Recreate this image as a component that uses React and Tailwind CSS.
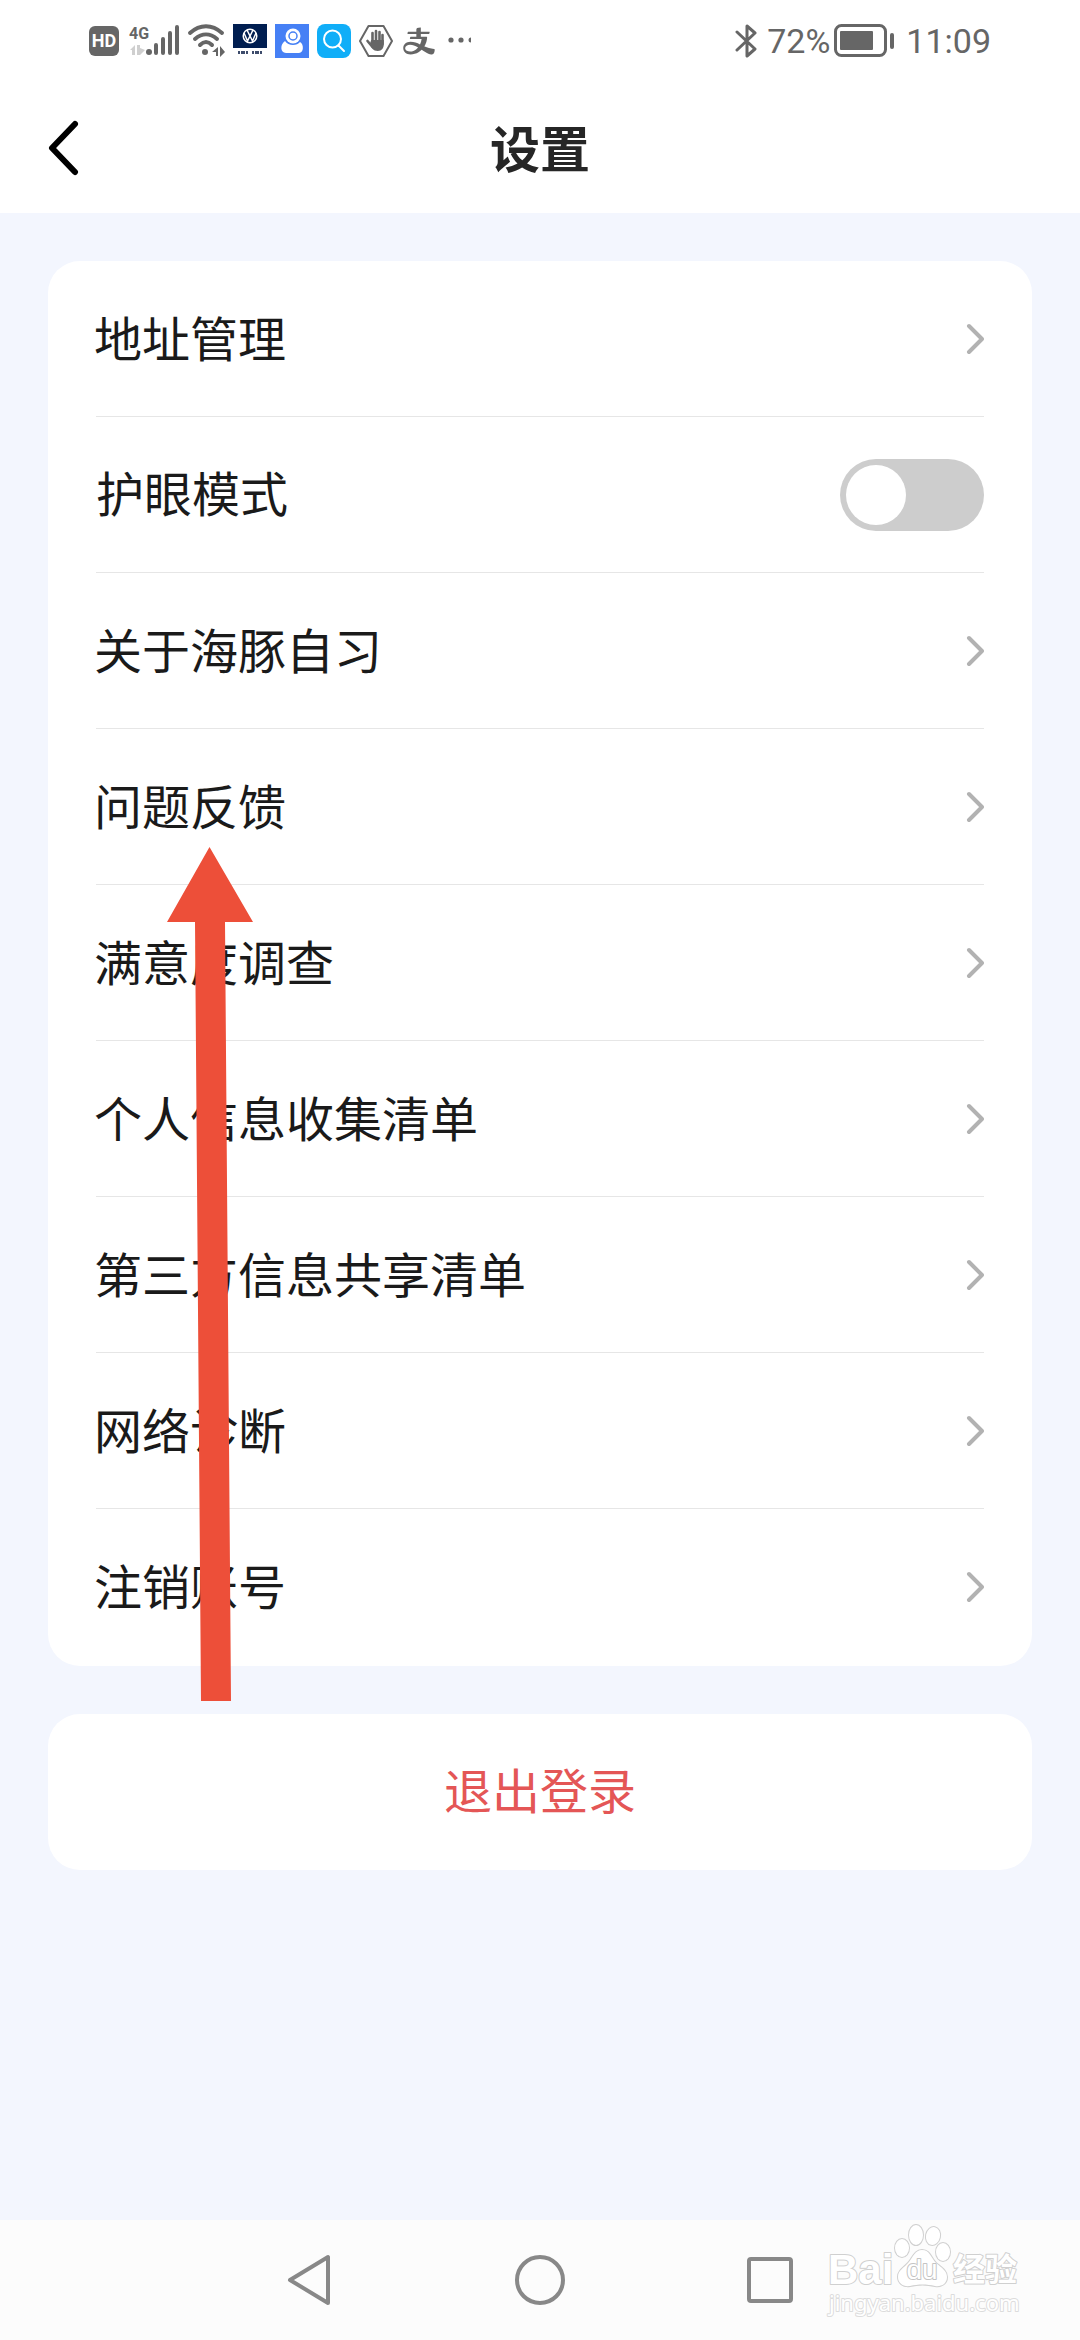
import React, { useState } from 'react';
import { AiOutlineAlipay } from 'react-icons/ai';

const menuItems = [
  { id: 'address', label: '地址管理' },
  { id: 'eye-care', label: '护眼模式', type: 'switch' },
  { id: 'about', label: '关于海豚自习' },
  { id: 'feedback', label: '问题反馈' },
  { id: 'survey', label: '满意度调查' },
  { id: 'personal-info', label: '个人信息收集清单' },
  { id: 'third-party', label: '第三方信息共享清单' },
  { id: 'network', label: '网络诊断' },
  { id: 'close-account', label: '注销账号' },
];

const SignalIcon = () => (
  <svg className="overflow-visible" width="52" height="34" viewBox="0 0 52 34" fill="currentColor">
    <text x="2" y="15" fontSize="16" fontWeight="700" fontFamily="Roboto, sans-serif">4G</text>
    <path d="M3 26l5-5v10H5v-5zM10 21h3v3l5 2-5 5h-3z" fill="#cfcfcf" />
    <circle cx="22" cy="28" r="3" />
    <path d="M29 21v8M36 15v14M43 9v20M50 3v26" stroke="currentColor" strokeWidth="4" strokeLinecap="round" />
  </svg>
);

const WifiIcon = () => (
  <svg width="38" height="34" viewBox="0 0 38 34" fill="none" stroke="currentColor" strokeWidth="4" strokeLinecap="round">
    <path d="M3 9C13 0 25 0 35 9M8 15c7-6 15-6 22 0M13 21c4-4 8-4 12 0" />
    <circle cx="18" cy="28" r="3" fill="currentColor" stroke="none" />
    <path d="M25 28l6-5v9h-2v-4zM33 22l5 6-5 5z" fill="currentColor" stroke="none" />
  </svg>
);

const CarAppIcon = () => (
  <svg width="34" height="34" viewBox="0 0 34 34">
    <rect width="34" height="24" fill="#001e50" />
    <g fill="none" stroke="#fff" strokeWidth="1.5">
      <circle cx="17" cy="12" r="6.8" />
      <path d="M14 6l3 6 3-6M11 9l3.500 8 2.500-5 2.500 5L23 9" />
    </g>
    <path d="M5 28.500h5M10 28.500h6M19 28.500h5M24 28.500h5" stroke="#3d4b6b" strokeWidth="3" strokeDasharray="2 1" />
  </svg>
);

const CameraAppIcon = () => (
  <svg width="34" height="34" viewBox="0 0 34 34">
    <rect width="34" height="34" fill="#4680f5" />
    <circle cx="18" cy="12" r="7.5" fill="#fff" />
    <circle cx="18" cy="12" r="4" fill="none" stroke="#4680f5" strokeWidth="1.5" />
    <path d="M10 17c3 5 12 5 15 1 4 2 4 11-1 11H11c-6 0-6-9-1-12z" fill="#fff" />
  </svg>
);

const SearchAppIcon = () => (
  <svg width="34" height="34" viewBox="0 0 34 34">
    <rect width="34" height="34" rx="8" fill="#10aef8" />
    <g fill="none" stroke="#fff" strokeWidth="2" strokeLinecap="round">
      <circle cx="15.5" cy="15" r="8.5" />
      <path d="M21.500 21.500l5.500 5.500" />
    </g>
  </svg>
);

const HandIcon = () => (
  <svg width="34" height="34" viewBox="0 0 34 34">
    <path d="M9.500 2h15L33 17l-8.500 15h-15L1 17z" fill="none" stroke="currentColor" strokeWidth="2" strokeLinejoin="round" />
    <path d="M13.500 9v10M17 7v12M20.500 8v11M23.500 11v9M8.500 17l5 6" stroke="currentColor" strokeWidth="2.6" strokeLinecap="round" />
    <path d="M12.200 16h12.600v4c0 4-2 7-6 7-5 0-6-3-8-7z" fill="currentColor" />
  </svg>
);

const StatusBar = () => (
  <div className="flex h-[82px] items-center justify-between px-[89px] text-[#666666]">
    <div className="flex items-center gap-2">
      <span className="flex h-[30px] w-[30px] items-center justify-center rounded-md bg-[#666666] font-[Roboto,sans-serif] text-[18px] font-bold text-white">
        HD
      </span>
      <SignalIcon />
      <WifiIcon />
      <CarAppIcon />
      <CameraAppIcon />
      <SearchAppIcon />
      <HandIcon />
      <AiOutlineAlipay size={36} />
      <svg width="26" height="34" viewBox="0 0 26 34" fill="currentColor">
        <circle cx="6" cy="16" r="2.6" />
        <circle cx="16" cy="16" r="2.6" />
        <path d="M26 13.500a2.500 2.500 0 0 0 0 5z" />
      </svg>
    </div>
    <div className="flex items-center font-[Roboto,sans-serif] text-[34px] leading-none">
      <svg width="24" height="36" viewBox="0 0 24 36" fill="none" stroke="currentColor" strokeWidth="3" strokeLinejoin="round" strokeLinecap="round">
        <path d="M2 9l18 17-8 7V3l8 7L2 27" />
      </svg>
      <span className="ml-2">72%</span>
      <svg className="ml-1" width="60" height="34" viewBox="0 0 60 34">
        <rect x="1.5" y="1.5" width="50" height="30" rx="6" fill="none" stroke="currentColor" strokeWidth="3" />
        <rect x="6" y="7" width="33" height="19" rx="1" fill="currentColor" />
        <rect x="56" y="9" width="4" height="16" rx="2" fill="currentColor" />
      </svg>
      <span className="ml-3">11:09</span>
    </div>
  </div>
);

const Switch = ({ id }) => {
  const [checked, setChecked] = useState(false);
  return (
    <input
      id={id}
      type="checkbox"
      role="switch"
      checked={checked}
      onChange={(e) => setChecked(e.target.checked)}
      className="flex h-[72px] w-[144px] appearance-none items-center rounded-full bg-[#cdcdcd] px-1.5 before:h-[60px] before:w-[60px] before:rounded-full before:bg-white checked:justify-end checked:bg-blue-500"
    />
  );
};

const MenuRow = ({ item }) => {
  if (item.type === 'switch') {
    return (
      <div className="flex h-[155px] items-center justify-between">
        <label htmlFor={item.id} className="pb-2">{item.label}</label>
        <Switch id={item.id} />
      </div>
    );
  }

  return (
    <button type="button" className="flex h-[155px] w-full items-center justify-between text-left">
      <span className="-ml-0.5 pb-1.5">{item.label}</span>
      <svg width="18" height="32" viewBox="0 0 18 32" fill="none" stroke="#b2b2b2" strokeWidth="4" strokeLinecap="round" strokeLinejoin="round">
        <path d="M3 3l13 13L3 29" />
      </svg>
    </button>
  );
};

const Watermark = () => (
  <svg
    className="absolute top-0 right-[52px]"
    width="204"
    height="120"
    viewBox="0 0 204 120"
    fill="#fff"
    stroke="#d0d0d0"
    strokeWidth="2"
    strokeLinejoin="round"
    paintOrder="stroke"
  >
    <text x="4" y="64" fontSize="42" fontWeight="700" fontFamily="Liberation Sans, sans-serif">Bai</text>
    <ellipse cx="78" cy="28" rx="7" ry="9" />
    <ellipse cx="92" cy="15" rx="7" ry="10" />
    <ellipse cx="109" cy="16" rx="7" ry="9" transform="rotate(12 109 16)" />
    <ellipse cx="119" cy="32" rx="7" ry="9" />
    <path d="M98 30c8 0 9 8 14 13 6 5 11 8 11 14 0 7-6 10-12 9-8-2-17-2-25 0-7 1-12-3-12-9 0-7 6-9 11-15 4-5 6-12 13-12z" />
    <text x="98" y="59" textAnchor="middle" fontSize="28" fontFamily="Liberation Sans, sans-serif" stroke="#c4c4c4">du</text>
    <text x="129" y="61" fontSize="32" fontWeight="700" fontFamily="Noto Sans CJK SC, sans-serif">经验</text>
    <text x="5" y="91" fontSize="22" fontFamily="Noto Sans, sans-serif" stroke="#dcdcdc">jingyan.baidu.com</text>
  </svg>
);

const NavigationBar = () => (
  <nav className="relative grid h-[120px] grid-cols-3 items-center justify-items-center bg-[#fcfcfc] px-[18%] text-[#888888]">
    <button type="button" aria-label="返回">
      <svg width="50" height="54" viewBox="0 0 50 54" fill="none" stroke="currentColor" strokeWidth="4" strokeLinejoin="round">
        <path d="M43 4v46L5 27z" />
      </svg>
    </button>
    <button type="button" aria-label="主页">
      <svg width="54" height="54" viewBox="0 0 54 54" fill="none" stroke="currentColor" strokeWidth="4">
        <circle cx="27" cy="27" r="23" />
      </svg>
    </button>
    <button type="button" aria-label="最近任务">
      <svg width="50" height="54" viewBox="0 0 50 54" fill="none" stroke="currentColor" strokeWidth="4">
        <rect x="4" y="6" width="42" height="42" rx="2" />
      </svg>
    </button>
    <Watermark />
  </nav>
);

const App = () => {
  return (
    <div className="relative flex min-h-screen flex-col bg-[#f3f6fe] font-['Noto_Sans_CJK_SC',sans-serif] text-[48px] leading-none text-[#1a1a1a]">
      <header className="bg-white">
        <StatusBar />
        <div className="grid h-[131px] grid-cols-[1fr_auto_1fr] items-center px-12">
          <button type="button" aria-label="返回" className="justify-self-start">
            <svg width="31" height="56" viewBox="0 0 31 56" fill="none" stroke="#000" strokeWidth="6" strokeLinecap="round" strokeLinejoin="round">
              <path d="M27 4L4 28l23 24" />
            </svg>
          </button>
          <h1 className="pb-1 text-[50px] font-bold text-[#262626]">设置</h1>
        </div>
      </header>

      <main className="flex flex-1 flex-col gap-12 p-12">
        <ul className="divide-y divide-[#e6e6e6] rounded-[32px] bg-white px-12 pb-0.5">
          {menuItems.map((item) => (
            <li key={item.id}>
              <MenuRow item={item} />
            </li>
          ))}
        </ul>
        <button type="button" className="h-[156px] rounded-[32px] bg-white pb-2 text-[#e45656]">
          退出登录
        </button>
      </main>

      <NavigationBar />

      {/* pointer to the feedback entry */}
      <svg className="pointer-events-none absolute top-[847px] left-[167px]" width="88" height="856" viewBox="0 0 88 856" fill="#ed4f39">
        <path d="M42.500 0L86 75H58l6 779H34L28 75H0z" />
      </svg>
    </div>
  );
};

export default App;
